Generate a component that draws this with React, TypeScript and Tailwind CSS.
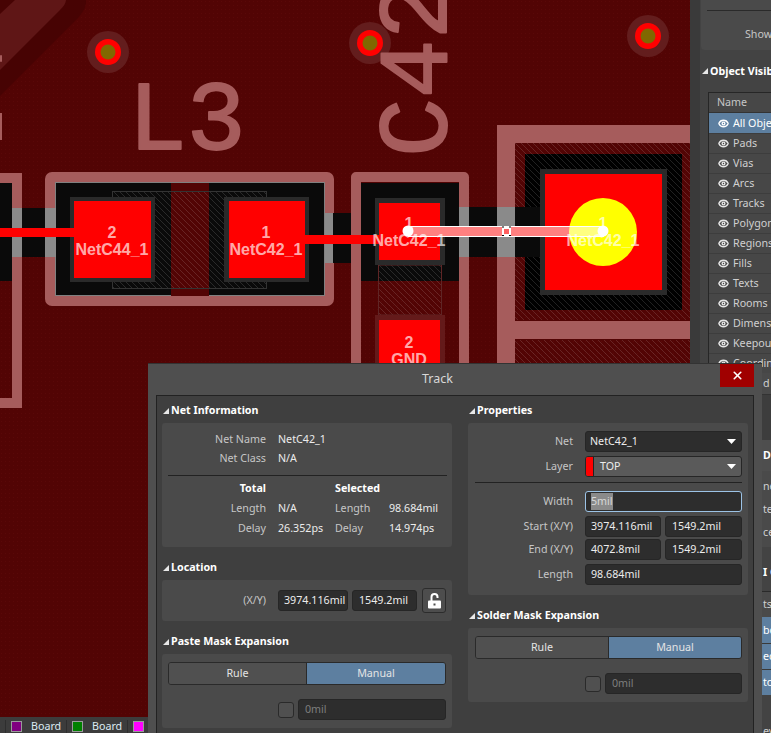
import { Eye, X } from "lucide-react";
import type { ReactNode } from "react";

const visibleObjects = ["Pads", "Vias", "Arcs", "Tracks", "Polygons", "Regions", "Fills", "Texts", "Rooms", "Dimensions", "Keepouts", "Coordinates"];

const PadLabel = ({ x, y, num, net }: { x: number; y: number; num: string; net: string }) => (
  <text textAnchor="middle" fontFamily="'Liberation Sans', sans-serif" fontWeight="700" fontSize="16" fill="#ffffff" fillOpacity="0.68">
    <tspan x={x} y={y}>{num}</tspan>
    <tspan x={x} y={y + 17}>{net}</tspan>
  </text>
);

const Via = ({ x, y }: { x: number; y: number }) => (
  <g>
    <circle cx={x} cy={y} r="21" fill="#631d1d" />
    <circle cx={x} cy={y} r="13" fill="#ff0000" />
    <circle cx={x} cy={y} r="7.5" fill="#806800" />
  </g>
);

// the board is a drawing, so it stays one svg
const Canvas = () => (
  <svg width="690" height="717" viewBox="0 0 690 717" className="block">
    <defs>
      <pattern id="dots" width="4" height="4" patternUnits="userSpaceOnUse">
        <rect width="4" height="4" fill="#520404" />
        <rect x="1" y="1" width="1" height="1" fill="#5a0808" />
      </pattern>
      <pattern id="hatch" width="6" height="6" patternUnits="userSpaceOnUse">
        <path d="M-1,-1 L7,7 M-1,5 L1,7 M5,-1 L7,1" stroke="#ffffff" strokeOpacity="0.13" strokeWidth="1" />
      </pattern>
    </defs>
    <rect width="690" height="717" fill="url(#dots)" />

    {/* top left polygon */}
    <path d="M0,96 L78,18 Q87,8 86,0 L0,0 Z" fill="#470303" />
    <path d="M0,70 L60,10 Q66,4 66,0 L15,0 L0,14 Z" fill="#5f1616" />
    <rect x="0" y="55" width="2" height="7" rx="1" fill="#a65c5c" />
    <rect x="0" y="113" width="2" height="27" fill="#a65c5c" />

    <Via x={108} y={52} />
    <Via x={370} y={43} />
    <Via x={648} y={36} />

    {/* silk designators */}
    <g fontFamily="'Liberation Mono', monospace" fontSize="98" fill="#a65c5c" stroke="#a65c5c" strokeWidth="2" strokeLinejoin="round">
      <text x="128" y="149">L3</text>
      <text transform="translate(446,157) rotate(-90)">C42</text>
    </g>

    {/* left stub */}
    <rect x="0" y="183" width="13" height="98" fill="#0a0a0a" />
    <path d="M0,178 H17 V403 H0" fill="none" stroke="#a65c5c" strokeWidth="10" />
    <rect x="22" y="208" width="24" height="49" fill="#0a0a0a" />
    <rect x="12" y="208" width="10" height="49" fill="#8a8a8a" />

    {/* L3 */}
    <rect x="50" y="177" width="279" height="124" rx="2" fill="none" stroke="#a65c5c" strokeWidth="10" />
    <rect x="55.5" y="182.5" width="269" height="113" fill="#0a0a0a" stroke="#808080" />
    <rect x="171" y="183" width="38" height="113" fill="#520404" />
    <rect x="112.5" y="191.5" width="154" height="97" fill="url(#hatch)" stroke="#333333" />
    <rect x="45" y="208" width="11" height="49" fill="#8a8a8a" />
    <rect x="70" y="197" width="85" height="85" fill="#2a2a2a" />
    <rect x="74" y="201" width="77" height="77" fill="#ff0000" />
    <rect x="224" y="197" width="85" height="85" fill="#2a2a2a" />
    <rect x="229" y="201" width="76" height="77" fill="#ff0000" />
    <rect x="325" y="213" width="8" height="50" fill="#8a8a8a" />
    <rect x="333" y="213" width="18" height="50" fill="#0a0a0a" />
    <rect x="351" y="213" width="10" height="50" fill="#8a8a8a" />

    {/* C42 */}
    <path d="M356,717 V177 H464 V717" fill="none" stroke="#a65c5c" strokeWidth="10" strokeLinejoin="round" />
    <rect x="361" y="183" width="98" height="98" fill="#0a0a0a" />
    <rect x="378.5" y="265" width="63" height="50" fill="url(#hatch)" stroke="#5f2525" />
    <rect x="375" y="198" width="70" height="67" fill="#2a2a2a" />
    <rect x="379" y="203" width="61" height="57" fill="#ff0000" />
    <rect x="375" y="315" width="70" height="60" fill="#641a1a" />
    <rect x="379" y="320" width="61" height="55" fill="#ff0000" />
    <rect x="459" y="207" width="10" height="50" fill="#8a8a8a" />
    <rect x="469" y="207" width="28" height="50" fill="#0a0a0a" />

    {/* big pad */}
    <rect x="515" y="143" width="175" height="177" fill="url(#hatch)" />
    <rect x="515" y="340" width="175" height="377" fill="url(#hatch)" />
    <path d="M690,134 H506 V717 M515,330 H690" fill="none" stroke="#a65c5c" strokeWidth="18" />
    <rect x="525" y="154" width="157" height="156" fill="#000000" />
    <rect x="525" y="154" width="157" height="156" fill="url(#hatch)" />
    <rect x="497" y="207" width="18" height="50" fill="#8a8a8a" />
    <rect x="515" y="207" width="25" height="50" fill="#0a0a0a" />
    <rect x="540" y="169" width="127" height="126" fill="#2a2a2a" />
    <rect x="545" y="174" width="117" height="116" fill="#ff0000" />

    {/* tracks */}
    <rect x="0" y="228" width="74" height="9" fill="#ff0000" />
    <rect x="305" y="235" width="75" height="9" fill="#ff0000" />
    <rect x="408" y="226" width="195" height="11" fill="#ff0000" />
    <circle cx="603" cy="232" r="34" fill="#ffff00" />

    <PadLabel x={112} y={238} num="2" net="NetC44_1" />
    <PadLabel x={266} y={238} num="1" net="NetC42_1" />
    <PadLabel x={409} y={229} num="1" net="NetC42_1" />
    <PadLabel x={603} y={229} num="1" net="NetC42_1" />
    <PadLabel x={409} y={348} num="2" net="GND" />

    {/* selected track */}
    <rect x="408.5" y="226.5" width="195" height="10" fill="#ffffff" fillOpacity="0.5" stroke="#ffffff" />
    <circle cx="408" cy="231" r="5.5" fill="#ffffff" />
    <circle cx="603" cy="231" r="5.5" fill="#ffffff" />
    <rect x="502" y="227" width="9" height="9" fill="#ffffff" />
    <rect x="504" y="229" width="5" height="5" fill="#ff6060" />
    <path d="M502,227 h2 M509,227 h2 M502,235.5 h2 M509,235.5 h2" stroke="#000000" />
  </svg>
);

const Arrow = () => (
  <svg width="6" height="6" viewBox="0 0 6 6" className="shrink-0">
    <polygon points="6,0 6,6 0,6" fill="#e8e8e8" />
  </svg>
);

const Heading = ({ children }: { children: ReactNode }) => (
  <div className="h-[24px] flex items-center gap-[2px] pl-[1px] pb-[1px] font-bold text-white text-[10.7px]">
    <Arrow />
    <span>{children}</span>
  </div>
);

const Field = ({ value, className, muted }: { value: string; className: string; muted?: boolean }) => (
  <div className={`h-[21px] flex items-center pl-[6px] rounded-[3px] bg-[#2d2d2d] border border-[#262626] whitespace-nowrap ${muted ? "text-[#7d7d7d]" : "text-[#ececec]"} ${className}`}>
    {value}
  </div>
);

const FormRow = ({ label, children, className = "" }: { label: string; children: ReactNode; className?: string }) => (
  <div className={`flex gap-[12px] ${className}`}>
    <div className="w-[99px] text-right text-[#c6c6c6] leading-[21px] whitespace-nowrap">{label}</div>
    {children}
  </div>
);

const Segment = ({ w1, w2 }: { w1: string; w2: string }) => (
  <div className="flex h-[23px] rounded-[3px] border border-[#2a2a2a] overflow-hidden">
    <div className={`${w1} flex items-center justify-center bg-[#505050] text-[#e4e4e4] border-r border-[#2a2a2a]`}>Rule</div>
    <div className={`${w2} flex items-center justify-center bg-[#5d7fa0] text-[#e4e4e4]`}>Manual</div>
  </div>
);

const MaskOption = ({ className, width }: { className: string; width: string }) => (
  <div className={`flex items-center gap-[4px] ${className}`}>
    <div className="w-[16px] h-[16px] rounded-[3px] bg-[#505050] border border-[#2a2a2a]" />
    <Field value="0mil" muted className={width} />
  </div>
);

const LockButton = () => (
  <div className="w-[24px] h-[25px] -mt-[2px] ml-[5px] flex items-center justify-center rounded-[3px] bg-[#4d4d4d] border border-[#2c2c2c]">
    <svg width="13" height="16" viewBox="0 0 13 16">
      <path d="M3.5,8 V4 a3,3 0 0 1 6,0 V5" fill="none" stroke="#ffffff" strokeWidth="2" />
      <rect x="0" y="7.5" width="13" height="8" rx="1" fill="#ffffff" />
      <rect x="5.5" y="10.5" width="2" height="2" fill="#4d4d4d" />
    </svg>
  </div>
);

const StatRow = ({ label, value, label2, value2 }: { label: string; value: string; label2: string; value2: string }) => (
  <div className="grid grid-cols-[104px_69px_54px_1fr] h-[20px] items-center">
    <div className="text-right text-[#c6c6c6]">{label}</div>
    <div className="pl-[12px] text-[#ececec] whitespace-nowrap">{value}</div>
    <div className="text-[#c6c6c6]">{label2}</div>
    <div className="text-[#ececec]">{value2}</div>
  </div>
);

const TrackDialog = () => (
  <div className="absolute left-[148px] top-[363px] w-[614px] h-[380px] bg-[#4f4f4f] border-t border-[#333333] text-[10.7px]">
    <div className="h-[31px] pl-[274px] flex items-center text-[12.5px] text-[#d8d8d8] relative">
      Track
      <div className="absolute left-[572px] top-0 w-[34px] h-[23px] flex items-center justify-center bg-[#a00000]">
        <X size={13} strokeWidth={3} color="#ffffff" />
      </div>
    </div>
    <div className="mx-[8px] w-[598px] h-[350px] bg-[#3f3f3f] border border-[#222222] pt-[3px] pl-[5px] flex gap-[16px]">
      <div className="w-[290px]">
        <Heading>Net Information</Heading>
        <div className="h-[124px] rounded-[3px] bg-[#4a4a4a] pt-[7px]">
          <div className="grid grid-cols-[104px_1fr] h-[19px] items-center">
            <div className="text-right text-[#c6c6c6]">Net Name</div>
            <div className="pl-[12px] text-[#ececec]">NetC42_1</div>
          </div>
          <div className="grid grid-cols-[104px_1fr] h-[19px] items-center">
            <div className="text-right text-[#c6c6c6]">Net Class</div>
            <div className="pl-[12px] text-[#ececec]">N/A</div>
          </div>
          <div className="mx-[6px] mt-[7px] h-px w-[279px] bg-[#222222]" />
          <div className="grid grid-cols-[104px_69px_1fr] h-[22px] pt-[2px] items-center font-bold text-white">
            <div className="text-right">Total</div>
            <div />
            <div>Selected</div>
          </div>
          <StatRow label="Length" value="N/A" label2="Length" value2="98.684mil" />
          <StatRow label="Delay" value="26.352ps" label2="Delay" value2="14.974ps" />
        </div>
        <div className="mt-[9px]">
          <Heading>Location</Heading>
          <div className="h-[41px] rounded-[3px] bg-[#4a4a4a] pt-[10px] flex">
            <div className="w-[104px] text-right text-[#c6c6c6] leading-[21px]">(X/Y)</div>
            <Field value="3974.116mil" className="ml-[12px] w-[70px] !pl-[5px]" />
            <Field value="1549.2mil" className="ml-[4px] w-[65px]" />
            <LockButton />
          </div>
        </div>
        <div className="mt-[9px]">
          <Heading>Paste Mask Expansion</Heading>
          <div className="h-[74px] rounded-[3px] bg-[#4a4a4a] pt-[8px] px-[6px]">
            <Segment w1="w-[139px]" w2="w-[139px]" />
            <MaskOption className="ml-[110px] mt-[14px]" width="w-[148px]" />
          </div>
        </div>
      </div>
      <div className="w-[280px]">
        <Heading>Properties</Heading>
        <div className="h-[172px] rounded-[3px] bg-[#4a4a4a] pt-[8px] pl-[6px]">
          <FormRow label="Net">
            <div className="w-[157px] h-[21px] flex items-center justify-between pl-[4px] pr-[5px] rounded-[3px] bg-[#2d2d2d] border border-[#262626] text-[#ececec]">
              NetC42_1
              <svg width="9" height="5" viewBox="0 0 9 5"><polygon points="0,0 9,0 4.5,5" fill="#ffffff" /></svg>
            </div>
          </FormRow>
          <FormRow label="Layer" className="mt-[4px]">
            <div className="w-[157px] h-[21px] flex items-center justify-between pr-[5px] rounded-[3px] bg-[#5a5a5a] border border-[#262626] overflow-hidden text-[#ececec]">
              <div className="flex items-center h-full">
                <div className="w-[8px] h-full bg-[#ff0000] border-r border-[#222222]" />
                <span className="pl-[6px]">TOP</span>
              </div>
              <svg width="9" height="5" viewBox="0 0 9 5"><polygon points="0,0 9,0 4.5,5" fill="#ffffff" /></svg>
            </div>
          </FormRow>
          <div className="mt-[5px] mb-[8px] h-px w-[267px] ml-px bg-[#222222]" />
          <FormRow label="Width">
            <div className="w-[157px] h-[21px] flex items-center pl-[5px] rounded-[3px] bg-[#2d2d2d] border border-[#9cc3e6]">
              <span className="bg-[#8a8a8a] text-[#d8d8d8] leading-[17px]">5mil</span>
            </div>
          </FormRow>
          <FormRow label="Start (X/Y)" className="mt-[4px]">
            <div className="flex gap-[4px]">
              <Field value="3974.116mil" className="w-[76px] !pl-[5px]" />
              <Field value="1549.2mil" className="w-[77px]" />
            </div>
          </FormRow>
          <FormRow label="End (X/Y)" className="mt-[2px]">
            <div className="flex gap-[4px]">
              <Field value="4072.8mil" className="w-[76px] !pl-[5px]" />
              <Field value="1549.2mil" className="w-[77px]" />
            </div>
          </FormRow>
          <FormRow label="Length" className="mt-[4px]">
            <Field value="98.684mil" className="w-[157px] !pl-[5px]" />
          </FormRow>
        </div>
        <div className="mt-[9px]">
          <Heading>Solder Mask Expansion</Heading>
          <div className="h-[74px] rounded-[3px] bg-[#4a4a4a] pt-[8px] pl-[7px]">
            <div className="w-[267px]">
              <Segment w1="w-[133px]" w2="w-[132px]" />
            </div>
            <MaskOption className="ml-[110px] mt-[14px]" width="w-[137px]" />
          </div>
        </div>
      </div>
    </div>
  </div>
);

const EdgeRow = ({ text, className }: { text: string; className: string }) => (
  <div className={`pl-[63px] flex items-center whitespace-nowrap ${className}`}>{text}</div>
);

const SidePanel = () => (
  <div className="w-[81px] h-[733px] flex bg-[#3a3a3a] text-[10.7px] overflow-hidden">
    <div className="w-[10px] shrink-0" />
    <div className="w-[71px] shrink-0 bg-[#434343] overflow-hidden">
      <div className="h-[50px] rounded-bl-[4px] ml-px bg-[#4a4a4a] pt-[10px]">
        <div className="ml-[6px] h-px bg-[#2a2a2a]" />
        <div className="pl-[44px] pt-[14px] text-[#c6c6c6] leading-[18px] whitespace-nowrap">Show</div>
      </div>
      <div className="h-[42px] flex items-center gap-[2px] pl-[2px] font-bold text-white whitespace-nowrap">
        <Arrow />
        Object Visibility
      </div>
      <div className="ml-[8px] border-l border-t border-[#262626] w-[80px] overflow-hidden">
        <div className="h-[20px] pl-[8px] flex items-center text-[#c6c6c6] border-b border-[#333333] bg-[#474747]">Name</div>
        <div className="h-[20px] pl-[9px] flex items-center gap-[4px] bg-[#5d7fa0] text-white whitespace-nowrap">
          <Eye size={11} strokeWidth={3} className="shrink-0" />
          All Objects
        </div>
        {visibleObjects.map((name) => (
          <div key={name} className="h-[20px] pl-[9px] flex items-center gap-[4px] bg-[#474747] text-[#d0d0d0] border-t border-[#3d3d3d] whitespace-nowrap">
            <Eye size={11} strokeWidth={3} color="#e8e8e8" className="shrink-0" />
            {name}
          </div>
        ))}
      </div>
      <EdgeRow text="d" className="h-[21px] text-[#d0d0d0] bg-[#4a4a4a]" />
      <div className="h-[46px] bg-[#3d3d3d] border-t border-[#333333]" />
      <EdgeRow text="D" className="h-[31px] font-bold text-white bg-[#4e4e4e]" />
      <div className="h-[76px] bg-[#4a4a4a] pl-[63px] text-[#d0d0d0] leading-[23px] pt-[4px]">
        <div>ne</div>
        <div>te</div>
        <div>ce</div>
      </div>
      <EdgeRow text="I C" className="h-[44px] pt-[6px] font-bold text-white bg-[#434343]" />
      <EdgeRow text="ts" className="h-[26px] text-[#d0d0d0] bg-[#4a4a4a] border-t border-[#2a2a2a]" />
      <EdgeRow text="bo" className="h-[26px] text-white bg-[#5d7fa0]" />
      <EdgeRow text="ec" className="h-[26px] text-white bg-[#5d7fa0] border-t border-[#3a3a3a]" />
      <EdgeRow text="to" className="h-[26px] text-white bg-[#5d7fa0] border-t border-[#3a3a3a]" />
      <div className="h-[36px] pl-[63px] pt-[27px] bg-[#434343] text-[#d0d0d0] leading-[18px]">ev</div>
    </div>
  </div>
);

const LayerTab = ({ color, label }: { color: string; label?: string }) => (
  <div className="w-[61px] h-full flex items-center gap-[9px] pl-[5px] border-l border-[#2e2e2e]">
    <div className="w-[11px] h-[11px] shrink-0 border border-[#9a9a9a]" style={{ backgroundColor: color }} />
    {label && <span className="text-[#dbeaf2] text-[10.7px]">{label}</span>}
  </div>
);

export default function App() {
  return (
    <div className="relative w-[771px] h-[733px] overflow-hidden flex bg-[#3a3a3a] font-['Noto_Sans',sans-serif]">
      <div className="w-[690px] h-[733px]">
        <Canvas />
        <div className="h-[16px] pl-[5px] pt-[3px] flex bg-[#3c3c3c] overflow-hidden">
          <LayerTab color="#800080" label="Board" />
          <LayerTab color="#008000" label="Board" />
          <LayerTab color="#ff00ff" />
        </div>
      </div>
      <SidePanel />
      <TrackDialog />
    </div>
  );
}
